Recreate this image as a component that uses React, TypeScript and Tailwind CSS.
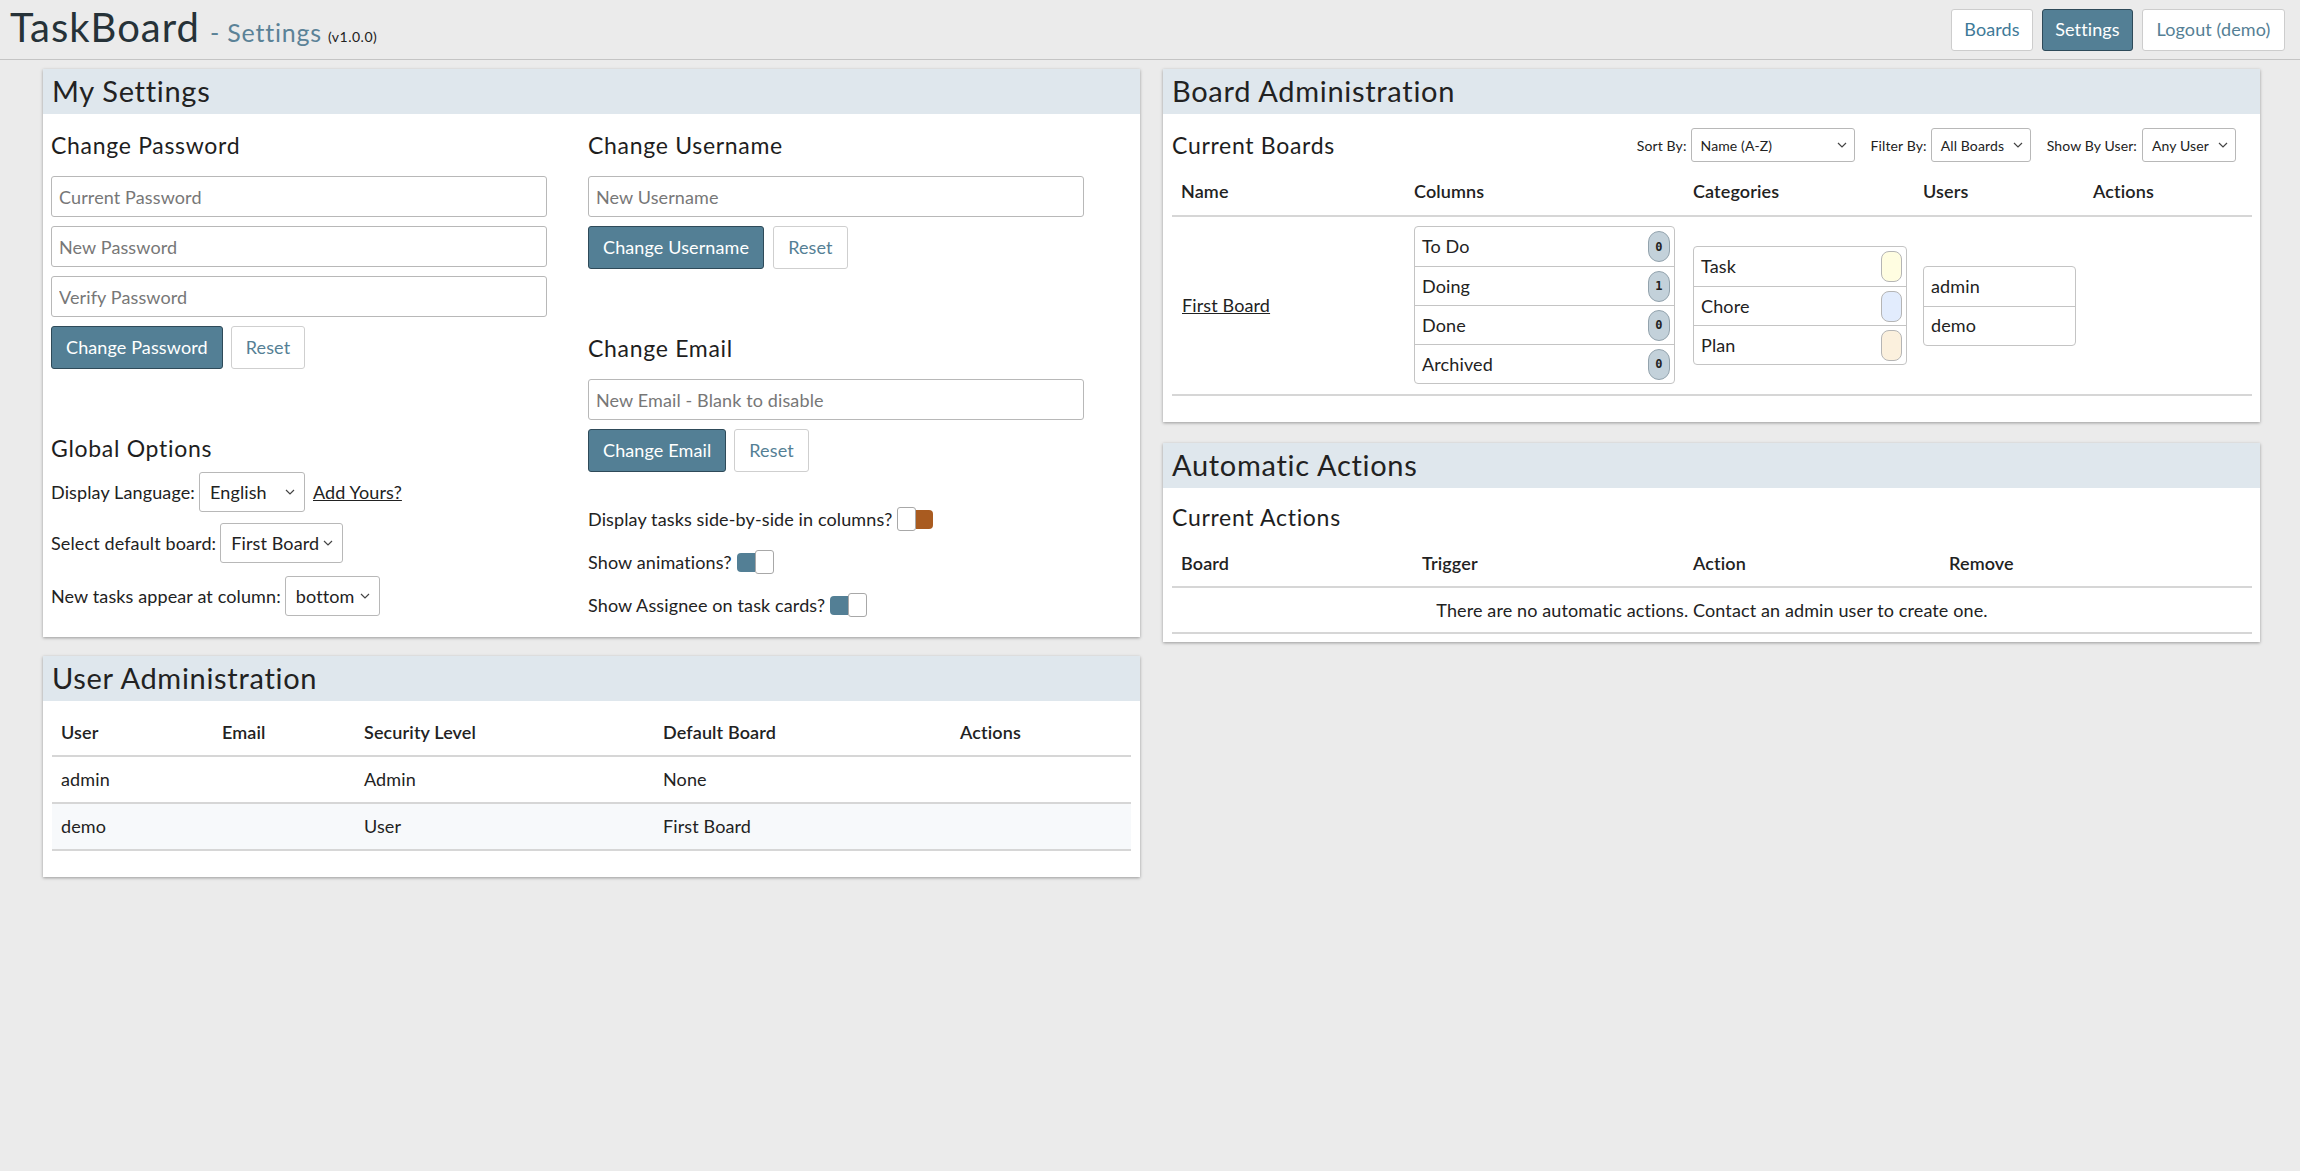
import React from "react";

const Chevron = () => (
  <svg viewBox="0 0 10 6" width="10" height="6" fill="none" stroke="#444" strokeWidth="1.2">
    <path d="M1 1l4 4 4-4" />
  </svg>
);

function Select({ value, w }: { value: string; w: string }) {
  return (
    <div className={`flex h-[40px] items-center justify-between rounded-[3px] border border-[#b8b8b8] bg-white pl-[10px] pr-[9px] text-[18px] ${w}`}>
      <span>{value}</span>
      <Chevron />
    </div>
  );
}

function SmallSelect({ value, w }: { value: string; w: string }) {
  return (
    <div className={`flex h-[34px] items-center justify-between rounded-[3px] border border-[#b8b8b8] bg-white pl-[9px] pr-[7px] text-[14px] ${w}`}>
      <span>{value}</span>
      <Chevron />
    </div>
  );
}

function Primary({ children }: { children: React.ReactNode }) {
  return (
    <button className="h-[43px] rounded-[3px] border border-[#2e4a59] bg-[#537f95] px-[14px] text-[18px] text-white">
      {children}
    </button>
  );
}

function Reset() {
  return (
    <button className="h-[43px] rounded-[3px] border border-[#cfcfcf] bg-white px-[14px] text-[18px] text-[#557f95]">
      Reset
    </button>
  );
}

function Input({ placeholder }: { placeholder: string }) {
  return (
    <input
      placeholder={placeholder}
      className="h-[41px] w-[496px] rounded-[3px] border border-[#b8b8b8] bg-white px-[7px] text-[18px] placeholder:text-[#777]"
    />
  );
}

function Toggle({ on, color }: { on: boolean; color: string }) {
  const knob = <div className="h-[24px] w-[19px] rounded-[3px] border border-[#a8a8a8] bg-white" />;
  if (on) {
    return (
      <div className="ml-[5px] flex items-center">
        <div className={`h-[19px] w-[18px] rounded-l-[4px] ${color}`} />
        {knob}
      </div>
    );
  }
  return (
    <div className="ml-[5px] flex items-center">
      {knob}
      <div className={`h-[19px] w-[17px] rounded-r-[4px] ${color}`} />
    </div>
  );
}

function Panel({ title, children, className = "" }: { title: string; children: React.ReactNode; className?: string }) {
  return (
    <section className={`bg-white shadow-[0_1px_3px_rgba(0,0,0,0.35)] ${className}`}>
      <div className="flex h-[45px] items-center bg-[#dfe7ed] px-[9px] pb-[3px] text-[29px] leading-none tracking-[0.7px] text-[#222]">
        {title}
      </div>
      {children}
    </section>
  );
}

function H3({ children, className = "" }: { children: React.ReactNode; className?: string }) {
  return <h3 className={`text-[23px] leading-[26px] tracking-[0.7px] text-[#1e1e1e] ${className}`}>{children}</h3>;
}

function ListBox({ items, w }: { items: { label: string; right: React.ReactNode }[]; w: string }) {
  return (
    <div className={`overflow-hidden rounded-[4px] border border-[#c4c4c4] ${w}`}>
      {items.map((it, i) => (
        <div
          key={it.label}
          className={`flex h-[39px] items-center justify-between pl-[7px] pr-[4px] text-[18px] ${i > 0 ? "border-t border-[#c4c4c4]" : ""}`}
        >
          <span>{it.label}</span>
          {it.right}
        </div>
      ))}
    </div>
  );
}

const Badge = ({ n }: { n: string }) => (
  <span className="flex h-[31px] w-[22px] items-center justify-center rounded-full border border-[#93a3ad] bg-[#c3d1da] font-['DejaVu_Sans_Mono',monospace] text-[12px] font-bold text-[#222]">
    {n}
  </span>
);

const Swatch = ({ c }: { c: string }) => (
  <span className={`h-[31px] w-[21px] rounded-[8px] border border-[#b5b5b5] ${c}`} />
);

export default function App() {
  return (
    <div className="min-h-screen bg-[#ebebeb] font-['Lato',sans-serif] tracking-[0.12px] text-[#222]">
      <header className="flex h-[60px] items-center justify-between border-b border-[#c4c4c4] pl-[10px] pr-[15px]">
        <h1 className="flex items-baseline">
          <span className="text-[40px] leading-none tracking-[1px] text-[#263238]">TaskBoard</span>
          <span className="ml-[10px] text-[25px] tracking-[0.8px] text-[#5b8297]">- Settings</span>
          <span className="ml-[6px] text-[14px] tracking-[0.5px] text-[#222]">(v1.0.0)</span>
        </h1>
        <nav className="flex gap-[9px]">
          <button className="h-[42px] w-[82px] rounded-[3px] border border-[#cdcdcd] bg-white text-[18px] text-[#3f7a98]">Boards</button>
          <button className="h-[42px] w-[91px] rounded-[3px] border border-[#2e4a59] bg-[#537f95] text-[18px] text-white">Settings</button>
          <button className="h-[42px] w-[143px] rounded-[3px] border border-[#cdcdcd] bg-white text-[18px] text-[#557f95]">Logout (demo)</button>
        </nav>
      </header>

      <main className="grid grid-cols-2 items-start gap-x-[23px] pl-[43px] pr-[40px] pt-[9px]">
        {/* Left column */}
        <div className="flex flex-col gap-[19px]">
          <Panel title="My Settings">
            <div className="grid grid-cols-[537px_1fr] px-[8px] pb-[17px]">
              <div>
                <H3 className="mt-[18px]">Change Password</H3>
                <div className="mt-[18px] flex flex-col gap-[9px]">
                  <Input placeholder="Current Password" />
                  <Input placeholder="New Password" />
                  <Input placeholder="Verify Password" />
                </div>
                <div className="mt-[9px] flex gap-[8px]">
                  <Primary>Change Password</Primary>
                  <Reset />
                </div>
                <H3 className="mt-[66px]">Global Options</H3>
                <div className="mt-[11px] flex flex-col gap-[11px] text-[18px]">
                  <div className="flex items-center">
                    <span>Display Language:</span>
                    <Select value="English" w="ml-[4px] w-[106px]" />
                    <a className="ml-[8px] underline">Add Yours?</a>
                  </div>
                  <div className="flex items-center">
                    <span>Select default board:</span>
                    <Select value="First Board" w="ml-[4px] w-[123px]" />
                  </div>
                  <div className="mt-[2px] flex items-center">
                    <span>New tasks appear at column:</span>
                    <Select value="bottom" w="ml-[4px] w-[95px]" />
                  </div>
                </div>
              </div>
              <div>
                <H3 className="mt-[18px]">Change Username</H3>
                <div className="mt-[18px]">
                  <Input placeholder="New Username" />
                </div>
                <div className="mt-[9px] flex gap-[9px]">
                  <Primary>Change Username</Primary>
                  <Reset />
                </div>
                <H3 className="mt-[66px]">Change Email</H3>
                <div className="mt-[18px]">
                  <Input placeholder="New Email - Blank to disable" />
                </div>
                <div className="mt-[9px] flex gap-[8px]">
                  <Primary>Change Email</Primary>
                  <Reset />
                </div>
                <div className="mt-[32px] flex flex-col gap-[13px] text-[18px]">
                  <div className="flex h-[30px] items-center">
                    <span>Display tasks side-by-side in columns?</span>
                    <Toggle on={false} color="bg-[#a95b20]" />
                  </div>
                  <div className="flex h-[30px] items-center">
                    <span>Show animations?</span>
                    <Toggle on={true} color="bg-[#537f95]" />
                  </div>
                  <div className="flex h-[30px] items-center">
                    <span>Show Assignee on task cards?</span>
                    <Toggle on={true} color="bg-[#537f95]" />
                  </div>
                </div>
              </div>
            </div>
          </Panel>

          <Panel title="User Administration">
            <div className="pl-[9px] pr-[9px] pb-[26px] pt-[8px]">
              <table className="w-full table-fixed border-collapse text-left text-[18px]">
                <colgroup>
                  <col className="w-[161px]" />
                  <col className="w-[142px]" />
                  <col className="w-[299px]" />
                  <col className="w-[297px]" />
                  <col />
                </colgroup>
                <thead>
                  <tr className="h-[47px] border-b-2 border-[#d6d6d6]">
                    <th className="pl-[9px] font-semibold">User</th>
                    <th className="pl-[9px] font-semibold">Email</th>
                    <th className="pl-[9px] font-semibold">Security Level</th>
                    <th className="pl-[9px] font-semibold">Default Board</th>
                    <th className="pl-[9px] font-semibold">Actions</th>
                  </tr>
                </thead>
                <tbody>
                  <tr className="h-[47px] border-b-2 border-[#d6d6d6]">
                    <td className="pl-[9px]">admin</td>
                    <td className="pl-[9px]"></td>
                    <td className="pl-[9px]">Admin</td>
                    <td className="pl-[9px]">None</td>
                    <td className="pl-[9px]"></td>
                  </tr>
                  <tr className="h-[47px] border-b-2 border-[#d6d6d6] bg-[#f7f9fb]">
                    <td className="pl-[9px]">demo</td>
                    <td className="pl-[9px]"></td>
                    <td className="pl-[9px]">User</td>
                    <td className="pl-[9px]">First Board</td>
                    <td className="pl-[9px]"></td>
                  </tr>
                </tbody>
              </table>
            </div>
          </Panel>
        </div>

        {/* Right column */}
        <div className="flex flex-col gap-[21px]">
          <Panel title="Board Administration">
            <div className="pl-[9px] pr-[8px] pb-[26px] pt-[14px]">
              <div className="flex h-[34px] items-center justify-between pr-[16px]">
                <H3>Current Boards</H3>
                <div className="flex items-center text-[14px]">
                  <span>Sort By:</span>
                  <SmallSelect value="Name (A-Z)" w="ml-[4px] w-[164px]" />
                  <span className="ml-[16px]">Filter By:</span>
                  <SmallSelect value="All Boards" w="ml-[4px] w-[100px]" />
                  <span className="ml-[16px]">Show By User:</span>
                  <SmallSelect value="Any User" w="ml-[5px] w-[94px]" />
                </div>
              </div>
              <table className="mt-[6px] w-full table-fixed border-collapse text-left text-[18px]">
                <colgroup>
                  <col className="w-[233px]" />
                  <col className="w-[279px]" />
                  <col className="w-[230px]" />
                  <col className="w-[170px]" />
                  <col />
                </colgroup>
                <thead>
                  <tr className="h-[48px] border-b-2 border-[#d6d6d6]">
                    <th className="pl-[9px] font-semibold">Name</th>
                    <th className="pl-[9px] font-semibold">Columns</th>
                    <th className="pl-[9px] font-semibold">Categories</th>
                    <th className="pl-[9px] font-semibold">Users</th>
                    <th className="pl-[9px] font-semibold">Actions</th>
                  </tr>
                </thead>
                <tbody>
                  <tr className="border-b-2 border-[#d6d6d6]">
                    <td className="pl-[10px] align-middle">
                      <a className="underline">First Board</a>
                    </td>
                    <td className="pb-[10px] pl-[9px] pt-[9px] align-middle">
                      <ListBox
                        w="w-[261px]"
                        items={[
                          { label: "To Do", right: <Badge n="0" /> },
                          { label: "Doing", right: <Badge n="1" /> },
                          { label: "Done", right: <Badge n="0" /> },
                          { label: "Archived", right: <Badge n="0" /> },
                        ]}
                      />
                    </td>
                    <td className="pl-[9px] align-middle">
                      <ListBox
                        w="w-[214px]"
                        items={[
                          { label: "Task", right: <Swatch c="bg-[#fffde1]" /> },
                          { label: "Chore", right: <Swatch c="bg-[#e2ecfd]" /> },
                          { label: "Plan", right: <Swatch c="bg-[#fbf0dd]" /> },
                        ]}
                      />
                    </td>
                    <td className="pl-[9px] align-middle">
                      <ListBox
                        w="w-[153px]"
                        items={[
                          { label: "admin", right: null },
                          { label: "demo", right: null },
                        ]}
                      />
                    </td>
                    <td></td>
                  </tr>
                </tbody>
              </table>
            </div>
          </Panel>

          <Panel title="Automatic Actions">
            <div className="pl-[9px] pr-[8px] pb-[8px] pt-[16px]">
              <H3>Current Actions</H3>
              <table className="mt-[11px] w-full table-fixed border-collapse text-left text-[18px]">
                <colgroup>
                  <col className="w-[241px]" />
                  <col className="w-[271px]" />
                  <col className="w-[256px]" />
                  <col />
                </colgroup>
                <thead>
                  <tr className="h-[46px] border-b-2 border-[#d6d6d6]">
                    <th className="pl-[9px] font-semibold">Board</th>
                    <th className="pl-[9px] font-semibold">Trigger</th>
                    <th className="pl-[9px] font-semibold">Action</th>
                    <th className="pl-[9px] font-semibold">Remove</th>
                  </tr>
                </thead>
                <tbody>
                  <tr className="h-[46px] border-b-2 border-[#d6d6d6]">
                    <td colSpan={4} className="text-center">
                      There are no automatic actions. Contact an admin user to create one.
                    </td>
                  </tr>
                </tbody>
              </table>
            </div>
          </Panel>
        </div>
      </main>
    </div>
  );
}
